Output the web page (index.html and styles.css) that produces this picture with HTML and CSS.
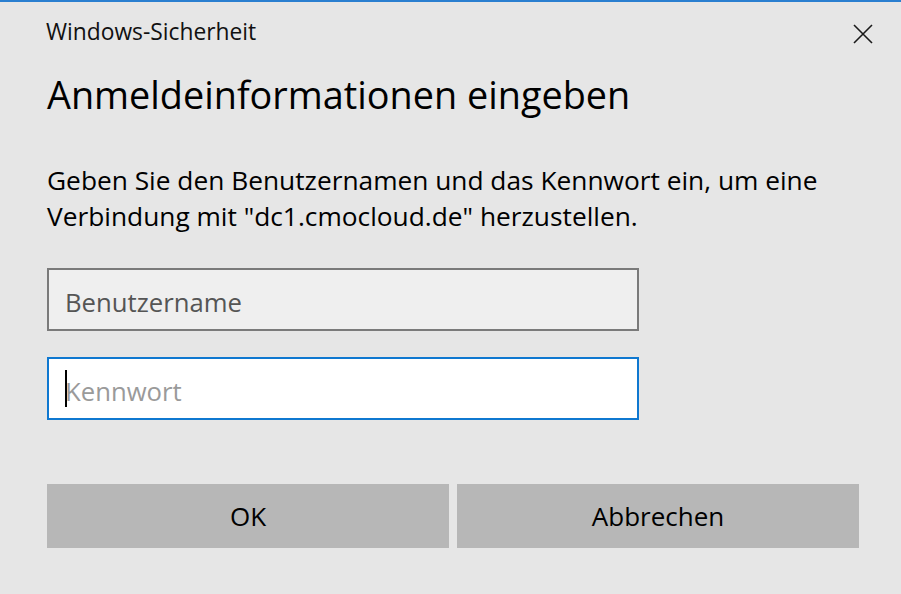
FILE: index.html
```html
<!DOCTYPE html>
<html lang="de">
<head>
<meta charset="utf-8">
<title>Windows-Sicherheit</title>
<link rel="stylesheet" href="styles.css">
</head>
<body>
<div class="dialog">
  <div class="titlebar">
    <span class="app-title">Windows-Sicherheit</span>
    <svg class="close" width="20" height="20" viewBox="0 0 20 20" aria-label="Schließen">
      <path d="M1 1 L19 19 M19 1 L1 19" stroke="#1a1a1a" stroke-width="1.6" fill="none"/>
    </svg>
  </div>
  <h1 class="heading">Anmeldeinformationen eingeben</h1>
  <p class="message">Geben Sie den Benutzernamen und das Kennwort ein, um eine<br>Verbindung mit "dc1.cmocloud.de" herzustellen.</p>
  <div class="fields">
    <div class="field">
      <input class="input input-user" type="text" placeholder="Benutzername">
    </div>
    <div class="field">
      <input class="input input-pass" type="password" placeholder="Kennwort">
      <span class="caret"></span>
    </div>
  </div>
  <div class="buttons">
    <button class="btn">OK</button>
    <button class="btn">Abbrechen</button>
  </div>
</div>
</body>
</html>
```
FILE: styles.css
```css
* { box-sizing: border-box; }
html, body { margin: 0; padding: 0; }
body {
  background: #e6e6e6;
  border-top: 2px solid #2a7fd0;
  height: 594px;
  font-family: "Open Sans", "Noto Sans", sans-serif;
  color: #000;
  overflow: hidden;
}
.dialog {
  padding: 0 42px 0 47px;
}
.titlebar {
  display: flex;
  justify-content: space-between;
  align-items: flex-start;
  height: 68px;
  padding-top: 15px;
  margin-left: -1px;
  margin-right: -14px;
}
.app-title {
  font-size: 22.8px;
  line-height: 30px;
  color: #111;
}
.close { display: block; margin-top: 7px; }
.heading {
  margin: 0;
  font-weight: normal;
  font-size: 37.8px;
  line-height: 50px;
  color: #000;
}
.message {
  margin: 42px 0 0;
  font-size: 26.3px;
  line-height: 36px;
  white-space: nowrap;
}
.fields {
  margin-top: 34px;
  display: flex;
  flex-direction: column;
  gap: 26px;
  width: 592px;
}
.field { position: relative; }
.input {
  display: block;
  width: 100%;
  height: 63px;
  margin: 0;
  padding: 6px 17px 0 16px;
  font-family: inherit;
  font-size: 25.7px;
  outline: none;
}
.input-user {
  background: #efefef;
  border: 2px solid #7a7a7a;
}
.input-user::placeholder { color: #555; opacity: 1; }
.input-pass {
  background: #fff;
  border: 2px solid #0f78d0;
}
.input-pass::placeholder { color: #9a9a9a; opacity: 1; }
.caret {
  position: absolute;
  left: 18px;
  top: 13px;
  width: 2px;
  height: 37px;
  background: #000;
}
.buttons {
  margin-top: 64px;
  display: flex;
  gap: 8px;
}
.btn {
  flex: 1;
  height: 64px;
  border: none;
  background: #b7b7b7;
  font-family: inherit;
  font-size: 26px;
  color: #000;
  padding: 0;
}
```
